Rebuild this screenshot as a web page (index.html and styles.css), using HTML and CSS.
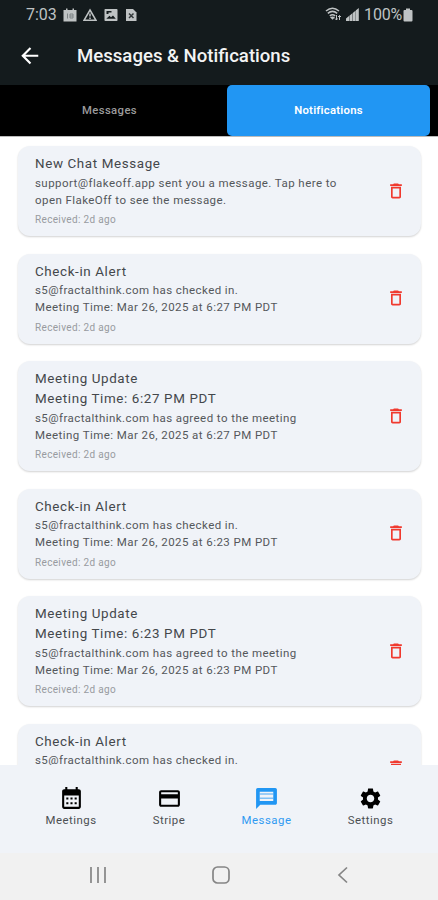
FILE: index.html
```html
<!DOCTYPE html>
<html lang="en">
<head>
<meta charset="utf-8">
<title>Messages &amp; Notifications</title>
<link rel="stylesheet" href="styles.css">
</head>
<body>
<svg class="defs" aria-hidden="true">
  <symbol id="trash" viewBox="0 0 24 24"><path d="M6 19c0 1.100.9 2 2 2h8c1.100 0 2-.9 2-2V7H6v12zM8 9h8v10H8V9zm7.500-5l-1-1h-5l-1 1H5v2h14V4h-3.500z"/></symbol>
</svg>
<div class="screen">
  <header class="top">
    <div class="status">
      <span class="clock">7:03</span>
      <svg class="s-icon" viewBox="0 0 14 14"><path d="M.5 2H3V.5h1.500V2h5V.5H11V2h2.500v11.500H.5z"/><path class="cut" d="M4.500 5.500v5M7 6h3v4H7zM7 8h3"/></svg>
      <svg class="s-icon warn" viewBox="0 0 14 14"><path class="line" d="M7 2L13 12.300H1z"/><path class="line" d="M7 5.500v3M7 9.500v1.500"/></svg>
      <svg class="s-icon" viewBox="0 0 14 14"><path fill-rule="evenodd" d="M1.300 1h11.400q.8 0 .8.800v10.400q0 .8-.8.800H1.300q-.8 0-.8-.8V1.800q0-.8.800-.8zM2.300 10.800h9.500L9 7.500l-2 1.800-1.500-1.500zM2.500 3v3h2V4.500h3V3z"/></svg>
      <svg class="s-icon" viewBox="0 0 14 14"><path d="M2 1h7l3.500 3.500V13H2z"/><path class="cut bold" d="M5 5.500l4.500 4.500M9.500 5.500L5 10"/></svg>
      <span class="grow"></span>
      <svg class="wifi" viewBox="0 0 17 15"><path class="line" d="M1 4q6.500-5.500 13 0M2.800 6.400q4.700-4 9.400 0M4.800 8.800q2.700-2.200 5.400 0"/><path d="M5 10.300q2.500-1.500 5 0l-2.500 2.400z"/><path class="thin" d="M11.500 8v5l-1.500-1.500M11.500 13l1-1.500M14.500 13V8.500l-1.500 1.500M14.500 8.500l1.500 1.500"/></svg>
      <svg class="signal" viewBox="0 0 13 13"><path d="M0 13v-2.500L3 8v5zM3.400 13V7.700L6.400 5.200V13zM6.800 13V4.900l2.900-2.400V13zM10 13V2.300L12.800 0v13z"/></svg>
      <span class="percent">100%</span>
      <svg class="battery" viewBox="0 0 10 14"><path d="M3 .5h4V2h1.500q1 0 1 1v9.500q0 1-1 1h-7q-1 0-1-1V3q0-1 1-1H3z"/></svg>
    </div>
    <div class="appbar">
      <svg class="back" viewBox="0 0 24 24"><path d="M20 11H7.830l5.590-5.590L12 4l-8 8 8 8 1.410-1.410L7.830 13H20v-2z"/></svg>
      <h1>Messages &amp; Notifications</h1>
    </div>
  </header>
  <nav class="tabs">
    <div class="tab">Messages</div>
    <div class="tab active">Notifications</div>
  </nav>
  <main class="list">
    <article class="card">
      <div class="copy"><h2>New Chat Message</h2><p>support@flakeoff.app sent you a message. Tap here to<br>open FlakeOff to see the message.</p><small>Received: 2d ago</small></div>
      <svg class="trash"><use href="#trash"/></svg>
    </article>
    <article class="card">
      <div class="copy"><h2>Check-in Alert</h2><p>s5@fractalthink.com has checked in.<br>Meeting Time: Mar 26, 2025 at 6:27 PM PDT</p><small>Received: 2d ago</small></div>
      <svg class="trash"><use href="#trash"/></svg>
    </article>
    <article class="card tall">
      <div class="copy"><h2>Meeting Update<br>Meeting Time: 6:27 PM PDT</h2><p>s5@fractalthink.com has agreed to the meeting<br>Meeting Time: Mar 26, 2025 at 6:27 PM PDT</p><small>Received: 2d ago</small></div>
      <svg class="trash"><use href="#trash"/></svg>
    </article>
    <article class="card">
      <div class="copy"><h2>Check-in Alert</h2><p>s5@fractalthink.com has checked in.<br>Meeting Time: Mar 26, 2025 at 6:23 PM PDT</p><small>Received: 2d ago</small></div>
      <svg class="trash"><use href="#trash"/></svg>
    </article>
    <article class="card tall">
      <div class="copy"><h2>Meeting Update<br>Meeting Time: 6:23 PM PDT</h2><p>s5@fractalthink.com has agreed to the meeting<br>Meeting Time: Mar 26, 2025 at 6:23 PM PDT</p><small>Received: 2d ago</small></div>
      <svg class="trash"><use href="#trash"/></svg>
    </article>
    <article class="card">
      <div class="copy"><h2>Check-in Alert</h2><p>s5@fractalthink.com has checked in.</p></div>
      <svg class="trash"><use href="#trash"/></svg>
    </article>
  </main>
  <nav class="bottom">
    <div class="item"><svg viewBox="0 0 24 24"><path fill-rule="evenodd" d="M19 3h-1V1h-2v2H8V1H6v2H5c-1.100 0-2 .9-2 2v15c0 1.100.9 2 2 2h14c1.100 0 2-.9 2-2V5c0-1.100-.9-2-2-2zm0 17H5V9h14v11z"/><path d="M7 11h2v2H7zM11 11h2v2h-2zM15 11h2v2h-2zM7 15.500h2v2H7zM11 15.500h2v2h-2zM15 15.500h2v2h-2z"/></svg><span>Meetings</span></div>
    <div class="item"><svg viewBox="0 0 24 24"><path fill-rule="evenodd" d="M20 4H4c-1.110 0-1.990.89-1.990 2L2 18c0 1.110.89 2 2 2h16c1.110 0 2-.89 2-2V6c0-1.110-.89-2-2-2zm0 14H4v-6h16v6zm0-10H4V6h16v2z"/></svg><span>Stripe</span></div>
    <div class="item on"><svg viewBox="0 0 24 24"><path fill-rule="evenodd" d="M3.500 2C2.700 2 2 2.700 2 3.500V22l4-4h14.500c.8 0 1.500-.7 1.500-1.500v-13c0-.8-.7-1.500-1.500-1.500zM5.500 5.500h13v9h-13z"/><path d="M5.500 7h13v1.500h-13zM5.500 11h13v1.500h-13z" opacity=".55"/></svg><span>Message</span></div>
    <div class="item"><svg viewBox="0 0 24 24"><path d="M19.140 12.940c.04-.3.060-.61.060-.94 0-.32-.02-.64-.07-.94l2.030-1.580c.18-.14.230-.41.120-.61l-1.920-3.320c-.12-.22-.37-.29-.59-.22l-2.390.96c-.5-.38-1.030-.7-1.620-.94l-.36-2.540c-.04-.24-.24-.41-.48-.41h-3.840c-.24 0-.43.170-.47.410l-.36 2.540c-.59.240-1.130.570-1.620.940l-2.390-.96c-.22-.08-.47 0-.59.220L2.740 8.870c-.12.210-.08.470.120.610l2.030 1.580c-.05.300-.09.630-.09.940s.02.640.070.940l-2.030 1.580c-.18.140-.23.410-.12.610l1.920 3.320c.12.220.370.290.590.220l2.390-.96c.5.380 1.030.700 1.620.940l.36 2.540c.05.240.240.410.480.410h3.840c.24 0 .44-.17.470-.41l.36-2.540c.59-.24 1.130-.56 1.620-.94l2.390.96c.22.080.470 0 .59-.22l1.920-3.320c.12-.22.070-.47-.12-.61l-2.010-1.580zM12 15.600c-1.980 0-3.600-1.620-3.600-3.600s1.620-3.600 3.600-3.600 3.600 1.620 3.600 3.600-1.620 3.600-3.600 3.600z"/></svg><span>Settings</span></div>
  </nav>
  <footer class="system">
    <svg viewBox="0 0 18 18"><path d="M2 1v16M9 1v16M16 1v16"/></svg>
    <svg viewBox="0 0 18 18"><rect x="1" y="1" width="16" height="16" rx="4.500"/></svg>
    <svg viewBox="0 0 18 18"><path d="M13 1.500L5 9l8 7.500"/></svg>
  </footer>
</div>
</body>
</html>
```

FILE: styles.css
```css
* { box-sizing: border-box; }
body { margin: 0; font-family: Roboto, sans-serif; background: #fff; }
h1, h2, p { margin: 0; }
.defs { display: none; }
.screen { width: 438px; height: 900px; display: flex; flex-direction: column; overflow: hidden; }

.top { height: 85px; flex: none; background: #141b1d; }
.status { height: 28px; display: flex; align-items: center; padding: 1px 25px 0 26px; color: #bfc3c4; fill: #bfc3c4; }
.clock { width: 37px; font-size: 16px; }
.s-icon { width: 14px; height: 14px; margin-right: 6.400px; }
.line { fill: none; stroke: #bfc3c4; stroke-width: 1.500; }
.thin { fill: none; stroke: #bfc3c4; stroke-width: 1; }
.cut { fill: none; stroke: #7d8385; stroke-width: 1; }
.bold { stroke: #33393b; stroke-width: 1.500; }
.grow { flex: 1; }
.wifi { width: 17px; height: 15px; margin-right: 4px; }
.signal { width: 13px; height: 13px; margin-right: 5px; }
.percent { font-size: 16px; letter-spacing: -.2px; }
.battery { width: 10px; height: 14px; margin-left: 1px; }
.appbar { height: 56px; display: flex; align-items: center; padding-left: 17px; }
.back { width: 25.500px; height: 25.500px; fill: #fff; }
h1 { margin-left: 34.500px; color: #f3f4f4; font-size: 18.600px; font-weight: 500; line-height: 24px; }

.tabs { height: 51px; flex: none; display: flex; background: #000; }
.tab { flex: 0 0 203px; display: flex; align-items: center; justify-content: center; margin-left: 8px; padding-bottom: 1px; color: #9b9b9b; font-size: 11.300px; font-weight: 500; letter-spacing: .4px; }
.tab + .tab { margin-left: 16px; }
.active { background: #2196f3; color: #fff; border-radius: 5px; font-weight: 600; letter-spacing: .25px; }

.list { height: 629px; flex: none; overflow: hidden; display: flex; flex-direction: column; gap: 17.500px; padding: 9px 17px 0 18px; border-top: 1px solid #bbb; }
.card { height: 90px; flex: none; display: flex; align-items: center; justify-content: space-between; padding: 0 15.500px 0 17px; background: #f0f3f8; border-radius: 12px; box-shadow: 0 1px 2px rgba(0,0,0,.18); }
.tall { height: 110px; }
.copy { align-self: stretch; padding-top: 8px; white-space: nowrap; }
h2 { font-size: 13.400px; font-weight: 400; line-height: 20px; letter-spacing: .62px; color: #44474b; }
p { padding-top: .5px; font-size: 11.500px; line-height: 17px; letter-spacing: .43px; color: #54575b; }
small { display: block; margin-top: 3.500px; font-size: 10px; line-height: 15px; letter-spacing: .34px; color: #989ba0; }
.trash { width: 20px; height: 20px; margin-bottom: 1px; fill: #f0392e; }

.bottom { height: 88px; flex: none; display: grid; grid-template-columns: 98px 98px 97px 111px; padding: 21px 0 0 22px; background: #f0f3f8; }
.item { display: flex; flex-direction: column; align-items: center; color: #4c4f53; fill: #000; font-size: 11.400px; line-height: 18px; letter-spacing: .5px; }
.item svg { width: 25px; height: 25px; }
.on { color: #2f9af2; fill: #2196f3; }
.system { height: 47px; flex: none; display: flex; justify-content: space-between; align-items: center; padding: 0 86px 4px 89px; background: #f1f1f1; }
.system svg { width: 18px; height: 18px; fill: none; stroke: #858585; stroke-width: 1.700; }
```
